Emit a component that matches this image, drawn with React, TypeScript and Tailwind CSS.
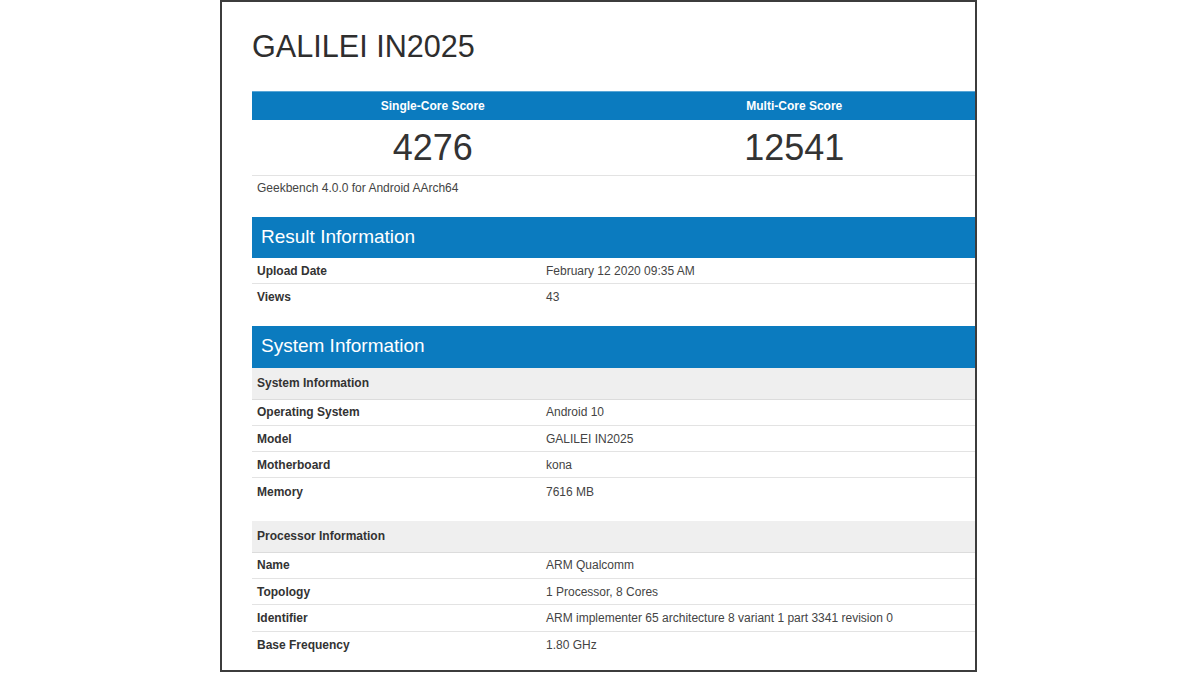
import React from "react";

const BLUE = "bg-[#0b7bbf]";

function Row({ label, value, last }: { label: string; value: string; last?: boolean }) {
  return (
    <div
      className={
        "grid grid-cols-[289px_1fr] h-[26.3px] items-center text-[12px] " +
        (last ? "" : "border-b border-[#e3e3e3]")
      }
    >
      <div className="pl-[5px] font-bold text-[#333]">{label}</div>
      <div className="pl-[5px] text-[#444]">{value}</div>
    </div>
  );
}

function SectionHeader({ title, className }: { title: string; className?: string }) {
  return (
    <div className={`${BLUE} h-[41px] flex items-center pl-[9px] text-[19px] text-white ${className ?? ""}`}>
      {title}
    </div>
  );
}

function SubHeader({ title, className }: { title: string; className?: string }) {
  return (
    <div
      className={`h-[32px] flex items-center pl-[5px] bg-[#efefef] border-b border-[#dcdcdc] text-[12px] font-bold text-[#333] ${className ?? ""}`}
    >
      {title}
    </div>
  );
}

export default function App() {
  return (
    <div
      className="w-[1200px] h-[675px] bg-white overflow-hidden"
      style={{ fontFamily: '"Liberation Sans", Arial, sans-serif' }}
    >
      <div className="ml-[220px] w-[757px] h-[672px] border-2 border-[#3c3c3c] pl-[30px] pt-[29px]">
        <h1 className="text-[30.6px] leading-[30px] h-[30px] text-[#2e2e2e]">GALILEI IN2025</h1>

        <div className="mt-[30px]">
          <div className={`grid grid-cols-2 h-[29px] ${BLUE} text-white text-[12px] font-bold border-t border-[#5aa6d6]`}>
            <div className="flex items-center justify-center">Single-Core Score</div>
            <div className="flex items-center justify-center">Multi-Core Score</div>
          </div>
          <div className="grid grid-cols-2 h-[56px] border-b border-[#e3e3e3] text-[36px] text-[#333]">
            <div className="flex items-center justify-center">4276</div>
            <div className="flex items-center justify-center">12541</div>
          </div>
          <div className="h-[24px] flex items-center pl-[5px] text-[12px] text-[#444]">
            Geekbench 4.0.0 for Android AArch64
          </div>
        </div>

        <SectionHeader title="Result Information" className="mt-[17px]" />
        <Row label="Upload Date" value="February 12 2020 09:35 AM" />
        <Row label="Views" value="43" last />

        <SectionHeader title="System Information" className="mt-[15px] h-[42px]" />
        <SubHeader title="System Information" />
        <Row label="Operating System" value="Android 10" />
        <Row label="Model" value="GALILEI IN2025" />
        <Row label="Motherboard" value="kona" />
        <Row label="Memory" value="7616 MB" last />

        <SubHeader title="Processor Information" className="mt-[16px] h-[31px]" />
        <Row label="Name" value="ARM Qualcomm" />
        <Row label="Topology" value="1 Processor, 8 Cores" />
        <Row label="Identifier" value="ARM implementer 65 architecture 8 variant 1 part 3341 revision 0" />
        <Row label="Base Frequency" value="1.80 GHz" last />
      </div>
    </div>
  );
}
